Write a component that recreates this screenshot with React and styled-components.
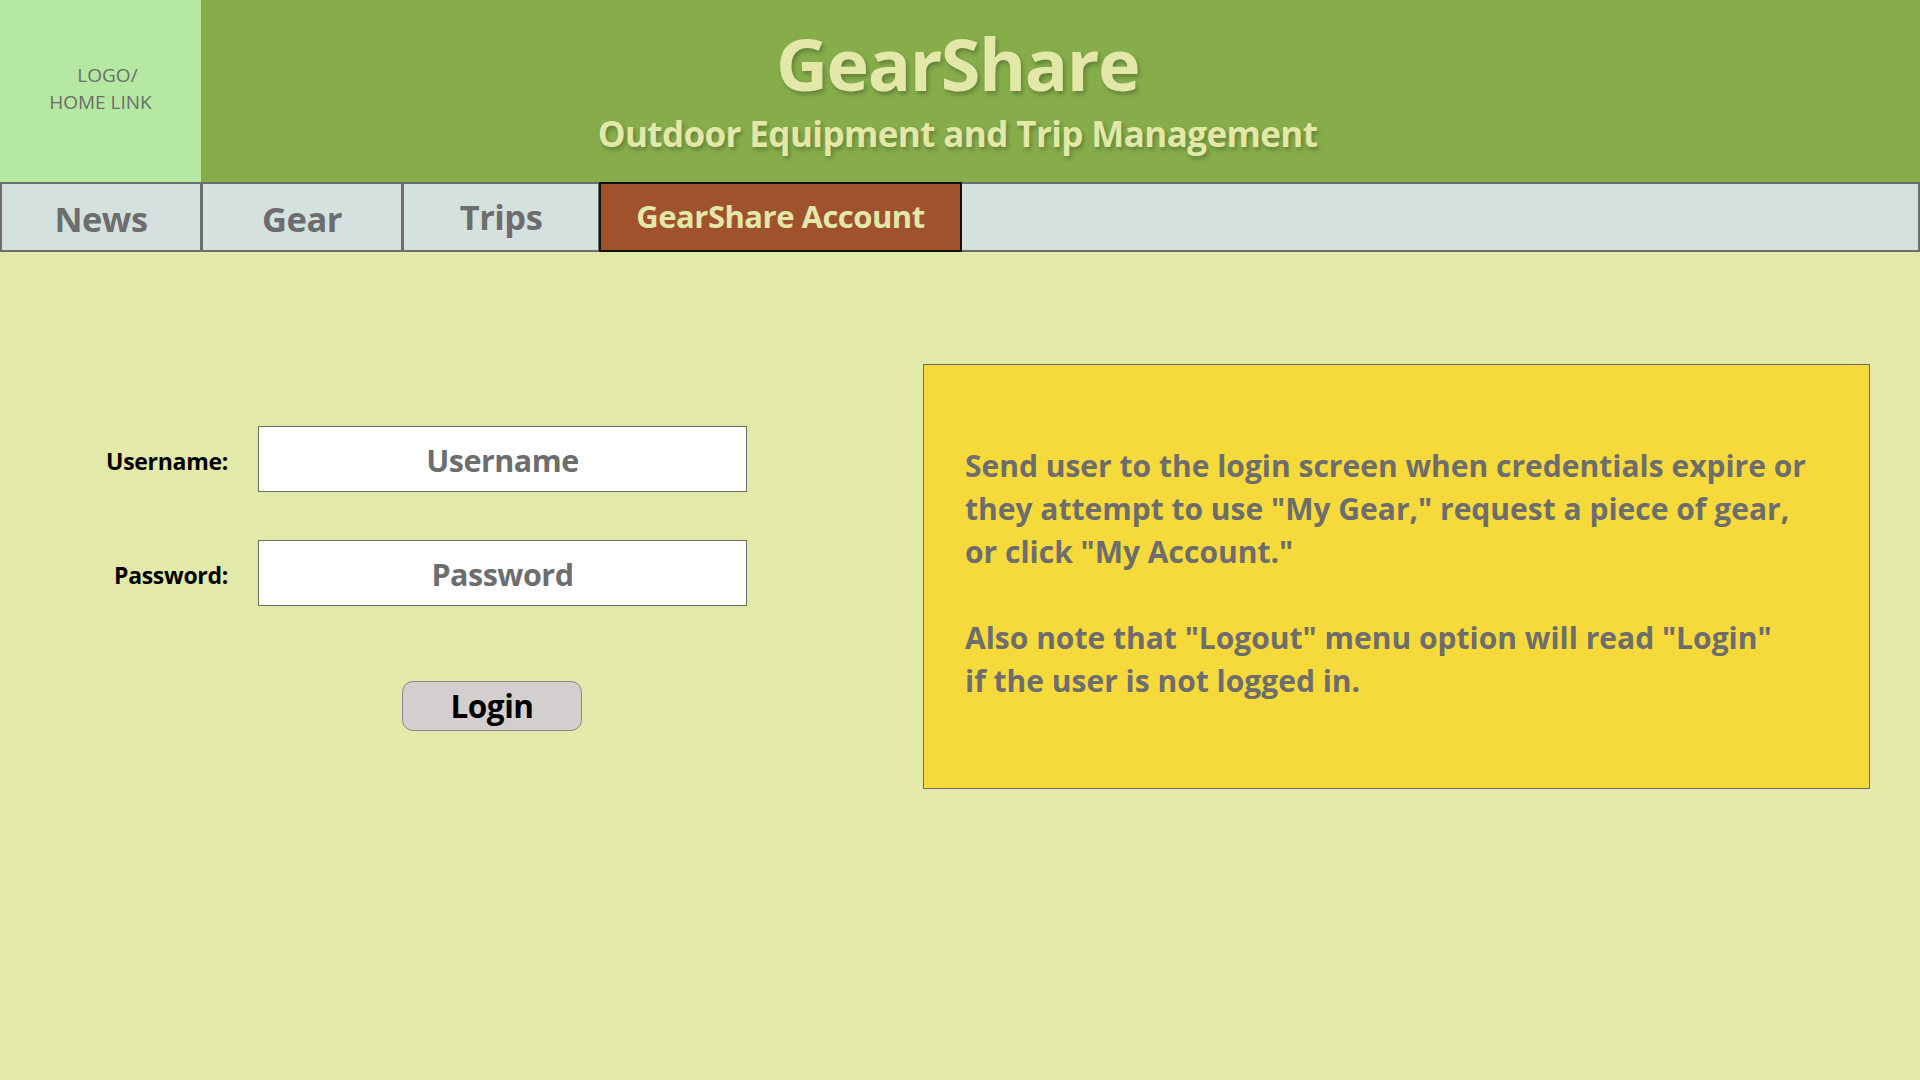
import React from "react";
import styled, { createGlobalStyle } from "styled-components";

const GlobalStyle = createGlobalStyle`
  html, body {
    margin: 0;
    padding: 0;
    background: #e2e9a9;
  }
  body {
    font-family: "Open Sans", "Noto Sans", sans-serif;
    min-height: 100vh;
  }
`;

const Page = styled.div`
  width: 1920px;
  min-height: 1080px;
  background: #e2e9a9;
`;

// top banner: logo block on the left, title on the right
const Header = styled.header`
  display: grid;
  grid-template-columns: 201px 1fr;
  height: 182px;
`;

const LogoLink = styled.a`
  display: flex;
  flex-direction: column;
  align-items: center;
  justify-content: center;
  background: #b5e8a1;
  color: #6d6d6d;
  font-size: 19px;
  line-height: 27px;
  text-decoration: none;
  padding-bottom: 4px;
`;

const LogoLine = styled.span`
  padding-left: ${(p) => (p.$shift ? "14px" : "0")};
`;

// title is centred on the page, not on the green block
const Banner = styled.div`
  display: flex;
  flex-direction: column;
  align-items: center;
  background: #86ad4a;
  color: #e3e8a9;
  text-shadow: 2px 3px 4px rgba(0, 0, 0, 0.25);
  padding-right: 206px;
`;

const Title = styled.h1`
  margin: 13px 0 0;
  font-size: 72px;
  font-weight: 700;
  line-height: 100px;
  letter-spacing: -1.5px;
`;

const Subtitle = styled.h2`
  margin: -2px 0 0;
  font-size: 35px;
  font-weight: 700;
  line-height: 46px;
  letter-spacing: -0.6px;
`;

const Nav = styled.nav`
  display: flex;
  height: 70px;
  box-sizing: border-box;
  background: #d5e1df;
  border: 2px solid #6d6d6d;
`;

const Tab = styled.a`
  display: flex;
  align-items: center;
  justify-content: center;
  box-sizing: border-box;
  width: ${(p) => p.$w}px;
  margin: ${(p) => (p.$active ? "-2px 0 -2px -2px" : "0")};
  border-right: 3px solid #6d6d6d;
  border: ${(p) => (p.$active ? "2px solid #111" : undefined)};
  background: ${(p) => (p.$active ? "#a0522d" : "transparent")};
  color: ${(p) => (p.$active ? "#e3e8a9" : "#6d6d6d")};
  font-size: ${(p) => (p.$active ? "31px" : "34.5px")};
  font-weight: 700;
  letter-spacing: -0.5px;
  text-decoration: none;
  padding-bottom: ${(p) => (p.$lift ? "2px" : "0")};
  padding-top: ${(p) => (p.$lift ? "0" : "2px")};
`;

const Main = styled.main`
  display: flex;
  align-items: flex-start;
  padding: 0 50px 0 0;
`;

const LoginForm = styled.form`
  display: grid;
  grid-template-columns: 228px 489px;
  column-gap: 30px;
  row-gap: 48px;
  align-items: center;
  margin-top: 174px;
  width: 923px;
`;

const Label = styled.label`
  justify-self: end;
  font-size: 23px;
  font-weight: 700;
  color: #000;
  letter-spacing: -0.3px;
  padding-top: 4px;
`;

const Input = styled.input`
  box-sizing: border-box;
  width: 489px;
  height: 66px;
  border: 1px solid #6d6d6d;
  background: #fff;
  text-align: center;
  font-family: "Open Sans", "Noto Sans", sans-serif;
  font-size: 30.5px;
  font-weight: 700;
  letter-spacing: -0.5px;
  color: #333;
  outline: none;
  padding: 2px 0 0;

  &::placeholder {
    color: #6d6d6d;
  }
`;

const ButtonCell = styled.div`
  grid-column: 2;
  padding-left: 144px;
  margin-top: 27px;
`;

const LoginButton = styled.button`
  width: 180px;
  height: 50px;
  border: 1px solid #8a8a8a;
  border-radius: 11px;
  background: #d3cfcf;
  font-family: "Open Sans", "Noto Sans", sans-serif;
  font-size: 31.5px;
  font-weight: 700;
  letter-spacing: -0.5px;
  color: #000;
  padding: 0;
  line-height: 46px;
`;

const Note = styled.div`
  box-sizing: border-box;
  width: 947px;
  height: 425px;
  margin-top: 112px;
  padding: 79px 0 0 41px;
  background: #f6d93b;
  border: 1px solid #6d6d6d;
  color: #6d6d6d;
  font-size: 30px;
  font-weight: 700;
  line-height: 43px;
  letter-spacing: 0;
  white-space: nowrap;
`;

const NotePara = styled.p`
  margin: 0 0 43px;
`;

const tabs = [
  { label: "News", w: 201 },
  { label: "Gear", w: 201 },
  { label: "Trips", w: 197, lift: true },
  { label: "GearShare Account", w: 363, active: true, lift: true },
];

export default function App() {
  return (
    <Page>
      <GlobalStyle />
      <Header>
        <LogoLink href="#">
          <LogoLine $shift>LOGO/</LogoLine>
          <LogoLine>HOME LINK</LogoLine>
        </LogoLink>
        <Banner>
          <Title>GearShare</Title>
          <Subtitle>Outdoor Equipment and Trip Management</Subtitle>
        </Banner>
      </Header>

      <Nav>
        {tabs.map((t) => (
          <Tab key={t.label} href="#" $w={t.w} $active={t.active} $lift={t.lift}>
            {t.label}
          </Tab>
        ))}
      </Nav>

      <Main>
        <LoginForm onSubmit={(e) => e.preventDefault()}>
          <Label htmlFor="username">Username:</Label>
          <Input id="username" placeholder="Username" />
          <Label htmlFor="password">Password:</Label>
          <Input id="password" type="password" placeholder="Password" />
          <ButtonCell>
            <LoginButton type="submit">Login</LoginButton>
          </ButtonCell>
        </LoginForm>

        <Note>
          <NotePara>
            Send user to the login screen when credentials expire or
            <br />
            they attempt to use "My Gear," request a piece of gear,
            <br />
            or click "My Account."
          </NotePara>
          <NotePara>
            Also note that "Logout" menu option will read "Login"
            <br />
            if the user is not logged in.
          </NotePara>
        </Note>
      </Main>
    </Page>
  );
}
